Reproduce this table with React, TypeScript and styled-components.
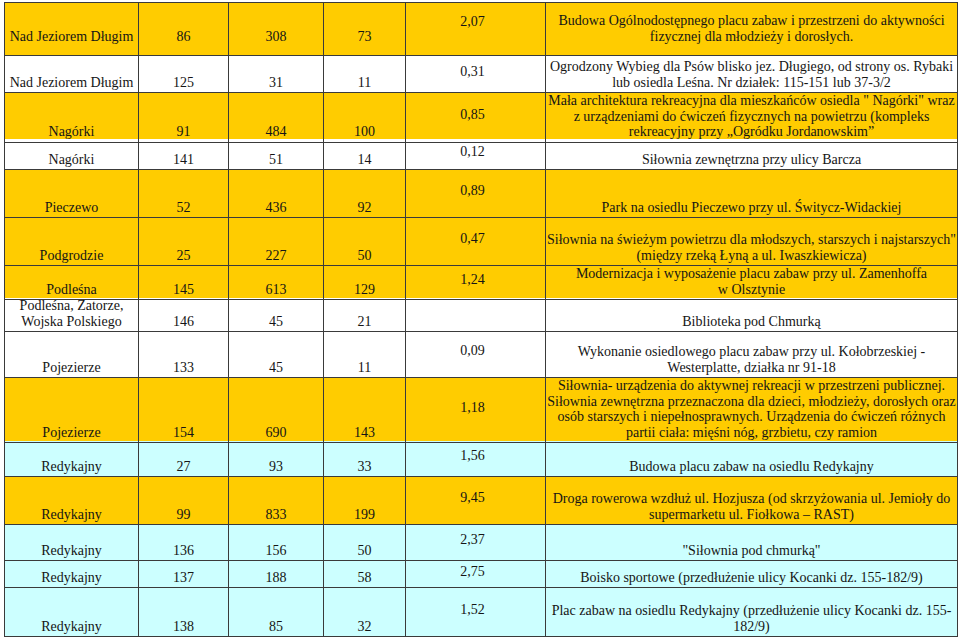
import React from "react";
import styled, { createGlobalStyle } from "styled-components";

type Tone = "yellow" | "white" | "cyan";

interface Row {
  name: string[];
  a: string;
  b: string;
  c: string;
  value: string;
  desc: string[];
  tone: Tone;
  height: number;
  lift?: number;
}

const rows: Row[] = [
  {
    name: ["Nad Jeziorem Długim"], a: "86", b: "308", c: "73", value: "2,07",
    desc: ["Budowa Ogólnodostępnego placu zabaw i przestrzeni do aktywności", "fizycznej dla młodzieży i dorosłych."],
    tone: "yellow", height: 53, lift: 9,
  },
  {
    name: ["Nad Jeziorem Długim"], a: "125", b: "31", c: "11", value: "0,31",
    desc: ["Ogrodzony Wybieg dla Psów blisko jez. Długiego, od strony os. Rybaki", "lub osiedla Leśna. Nr działek: 115-151 lub 37-3/2"],
    tone: "white", height: 37,
  },
  {
    name: ["Nagórki"], a: "91", b: "484", c: "100", value: "0,85",
    desc: ["Mała architektura rekreacyjna dla mieszkańców osiedla \" Nagórki\" wraz", "z urządzeniami do ćwiczeń fizycznych na powietrzu (kompleks", "rekreacyjny przy „Ogródku Jordanowskim”"],
    tone: "yellow", height: 46,
  },
  {
    name: ["Nagórki"], a: "141", b: "51", c: "14", value: "0,12",
    desc: ["Siłownia zewnętrzna przy ulicy Barcza"],
    tone: "white", height: 31,
  },
  {
    name: ["Pieczewo"], a: "52", b: "436", c: "92", value: "0,89",
    desc: ["Park na osiedlu Pieczewo przy ul. Świtycz-Widackiej"],
    tone: "yellow", height: 48,
  },
  {
    name: ["Podgrodzie"], a: "25", b: "227", c: "50", value: "0,47",
    desc: ["Siłownia na świeżym powietrzu dla młodszych, starszych i najstarszych\"", "(między rzeką Łyną a ul. Iwaszkiewicza)"],
    tone: "yellow", height: 48,
  },
  {
    name: ["Podleśna"], a: "145", b: "613", c: "129", value: "1,24",
    desc: ["Modernizacja i wyposażenie placu zabaw przy ul. Zamenhoffa", "w Olsztynie"],
    tone: "yellow", height: 32,
  },
  {
    name: ["Podleśna, Zatorze,", "Wojska Polskiego"], a: "146", b: "45", c: "21", value: "",
    desc: ["Biblioteka pod Chmurką"],
    tone: "white", height: 31,
  },
  {
    name: ["Pojezierze"], a: "133", b: "45", c: "11", value: "0,09",
    desc: ["Wykonanie osiedlowego placu zabaw przy ul. Kołobrzeskiej -", "Westerplatte, działka nr 91-18"],
    tone: "white", height: 49,
  },
  {
    name: ["Pojezierze"], a: "154", b: "690", c: "143", value: "1,18",
    desc: [
      "Siłownia- urządzenia do aktywnej rekreacji w przestrzeni publicznej.",
      "Siłownia zewnętrzna przeznaczona dla dzieci, młodzieży, dorosłych oraz",
      "osób starszych i niepełnosprawnych. Urządzenia do ćwiczeń różnych",
      "partii ciała: mięśni nóg, grzbietu, czy ramion",
    ],
    tone: "yellow", height: 63,
  },
  {
    name: ["Redykajny"], a: "27", b: "93", c: "33", value: "1,56",
    desc: ["Budowa placu zabaw na osiedlu Redykajny"],
    tone: "cyan", height: 36,
  },
  {
    name: ["Redykajny"], a: "99", b: "833", c: "199", value: "9,45",
    desc: ["Droga rowerowa wzdłuż ul. Hozjusza (od skrzyżowania ul. Jemioły do", "supermarketu ul. Fiołkowa – RAST)"],
    tone: "yellow", height: 48,
  },
  {
    name: ["Redykajny"], a: "136", b: "156", c: "50", value: "2,37",
    desc: ["\"Siłownia pod chmurką\""],
    tone: "cyan", height: 36,
  },
  {
    name: ["Redykajny"], a: "137", b: "188", c: "58", value: "2,75",
    desc: ["Boisko sportowe (przedłużenie ulicy Kocanki dz. 155-182/9)"],
    tone: "cyan", height: 27,
  },
  {
    name: ["Redykajny"], a: "138", b: "85", c: "32", value: "1,52",
    desc: ["Plac zabaw na osiedlu Redykajny (przedłużenie ulicy Kocanki dz. 155-", "182/9)"],
    tone: "cyan", height: 49,
  },
];

const tones: Record<Tone, string> = {
  yellow: "#ffcc00",
  white: "#ffffff",
  cyan: "#ccffff",
};

const GlobalStyle = createGlobalStyle`
  html, body {
    margin: 0;
    padding: 0;
    background: #ffffff;
  }
  body {
    font-family: "Liberation Serif", "Times New Roman", serif;
    color: #151515;
  }
  * {
    box-sizing: border-box;
  }
`;

const Page = styled.div`
  padding: 2px 3px 0 4px;
`;

const Table = styled.div`
  width: 954px;
  border-top: 1px solid #3a3a3a;
  border-left: 1px solid #3a3a3a;
  font-family: "Liberation Serif", "Times New Roman", serif;
  font-size: 14px;
  color: #151515;
`;

const TableRow = styled.div<{ $tone: Tone; $height: number }>`
  display: grid;
  grid-template-columns: 134px 90px 95px 82px 140px 412px;
  height: ${(p) => p.$height}px;
  background: ${(p) => tones[p.$tone]};
`;

const Cell = styled.div<{ $lift?: number }>`
  display: flex;
  flex-direction: column;
  justify-content: flex-end;
  align-items: center;
  padding-bottom: ${(p) => 2 + (p.$lift ?? 0)}px;
  border-right: 1px solid #3a3a3a;
  border-bottom: 1px solid #3a3a3a;
  text-align: center;
  white-space: nowrap;
  line-height: 15.5px;
  overflow: visible;
`;

const ValueCell = styled(Cell)`
  justify-content: center;
  padding-bottom: ${(p) => 5 + (p.$lift ?? 0)}px;
  padding-right: 6px;
`;

const App: React.FC = () => {
  return (
    <Page>
      <GlobalStyle />
      <Table>
        {rows.map((r, i) => (
          <TableRow key={i} $tone={r.tone} $height={r.height}>
            <Cell $lift={r.lift}>
              {r.name.map((l, j) => (
                <span key={j}>{l}</span>
              ))}
            </Cell>
            <Cell $lift={r.lift}>{r.a}</Cell>
            <Cell $lift={r.lift}>{r.b}</Cell>
            <Cell $lift={r.lift}>{r.c}</Cell>
            <ValueCell $lift={r.lift}>{r.value}</ValueCell>
            <Cell $lift={r.lift}>
              {r.desc.map((l, j) => (
                <span key={j}>{l}</span>
              ))}
            </Cell>
          </TableRow>
        ))}
      </Table>
    </Page>
  );
};

export default App;
